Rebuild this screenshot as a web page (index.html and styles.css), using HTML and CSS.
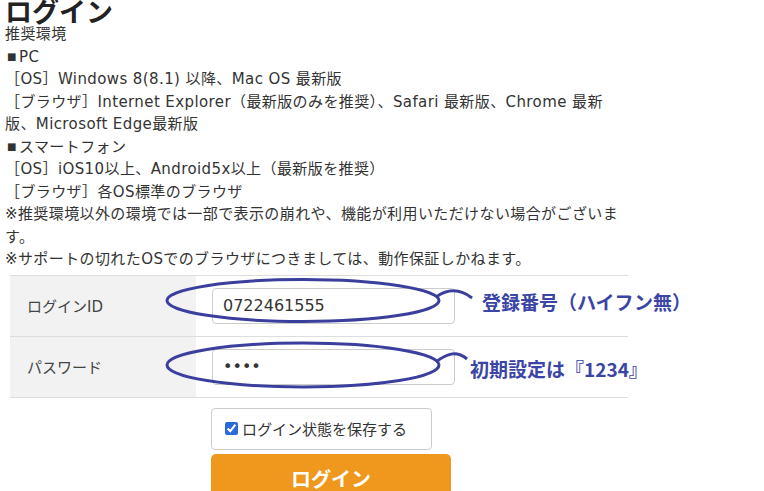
FILE: index.html
```html
<!DOCTYPE html>
<html lang="ja">
<head>
  <meta charset="UTF-8">
  <meta name="viewport" content="width=device-width, initial-scale=1.0">
  <title>ログイン</title>
  <link rel="stylesheet" href="styles.css">
</head>
<body>

<div class="page">
  <h1>ログイン</h1>
  <div class="env">
    <div>推奨環境</div>
    <div><span class="sq">■</span>PC</div>
    <div>［OS］Windows 8(8.1) 以降、Mac OS 最新版</div>
    <div>［ブラウザ］Internet Explorer（最新版のみを推奨）、Safari 最新版、Chrome 最新</div>
    <div>版、Microsoft Edge最新版</div>
    <div><span class="sq">■</span>スマートフォン</div>
    <div>［OS］iOS10以上、Android5x以上（最新版を推奨）</div>
    <div>［ブラウザ］各OS標準のブラウザ</div>
    <div>※推奨環境以外の環境では一部で表示の崩れや、機能が利用いただけない場合がございま</div>
    <div>す。</div>
    <div>※サポートの切れたOSでのブラウザにつきましては、動作保証しかねます。</div>
  </div>

  <table class="login-table">
    <tr>
      <th>ログインID</th>
      <td><input type="text" value="0722461555"></td>
    </tr>
    <tr>
      <th>パスワード</th>
      <td><input type="password" value="1234"></td>
    </tr>
  </table>

  <div class="actions">
    <label class="remember"><input type="checkbox" checked> ログイン状態を保存する</label>
    <button class="login-btn">ログイン</button>
  </div>
</div>

<!-- 手書きの注釈 -->
<svg class="marks" width="764" height="491" viewBox="0 0 764 491">
  <ellipse cx="303" cy="300.5" rx="136" ry="21" />
  <path d="M436 297 C446 290, 458 287, 472 298" />
  <ellipse cx="303" cy="365" rx="136" ry="22" />
  <path d="M436 362 C446 354, 456 350, 467 359" />
</svg>
<div class="note note-id">登録番号（ハイフン無）</div>
<div class="note note-pw">初期設定は『1234』</div>

</body>
</html>
```

FILE: styles.css
```css
body {
  margin: 0;
  font-family: "DejaVu Sans", "Noto Sans CJK JP", sans-serif;
  color: #333;
  background-color: #fff;
  overflow: hidden;
}

.page {
  padding: 0 5px;
}

h1 {
  margin: -1px 0 0;
  font-family: "Noto Sans CJK JP", sans-serif;
  font-size: 27px;
  line-height: 24px;
  font-weight: 700;
  color: #222;
}

.env {
  font-size: 15px;
  line-height: 22.5px;
  letter-spacing: 0.4px;
  white-space: nowrap;
}

.env > div {
  height: 22.5px;
}

.sq {
  display: inline-block;
  width: 12px;
  padding-left: 2px;
  font-size: 10px;
  vertical-align: top;
}

.login-table {
  margin: 4px 0 0 5px;
  width: 618px;
  border-collapse: collapse;
  border-top: 1px solid #ddd;
}

.login-table tr {
  border-bottom: 1px solid #ddd;
}

.login-table th {
  width: 169px;
  height: 60px;
  padding: 0 0 0 17px;
  background-color: #f2f2f2;
  text-align: left;
  font-weight: normal;
  font-size: 15px;
  color: #444;
}

.login-table td {
  padding: 0 0 0 16px;
}

.login-table input {
  width: 243px;
  height: 36px;
  padding: 0 10px;
  box-sizing: border-box;
  border: 1px solid #ccc;
  border-radius: 4px;
  font-family: "DejaVu Sans", sans-serif;
  font-size: 16px;
  color: #333;
}

.actions {
  margin: 10px 0 0 206px;
}

.remember {
  display: flex;
  align-items: center;
  gap: 4px;
  width: 221px;
  height: 42px;
  padding-left: 13px;
  box-sizing: border-box;
  border: 1px solid #ccc;
  border-radius: 4px;
  font-size: 15px;
  color: #333;
}

.remember input {
  margin: 0;
  width: 13px;
  height: 13px;
  accent-color: #2a6ad8;
}

.login-btn {
  display: block;
  margin-top: 4px;
  width: 240px;
  height: 50px;
  border: none;
  border-radius: 5px;
  background-color: #f0981e;
  color: #fff;
  font-family: "Noto Sans CJK JP", sans-serif;
  font-size: 20px;
  font-weight: 700;
  padding-bottom: 2px;
}

.marks {
  position: absolute;
  top: 0;
  left: 0;
  pointer-events: none;
}

.marks ellipse,
.marks path {
  fill: none;
  stroke: #3a3f9e;
  stroke-width: 3;
}

.note {
  position: absolute;
  font-family: "Noto Sans CJK JP", sans-serif;
  font-size: 19px;
  font-weight: 700;
  line-height: 24px;
  color: #3b45a6;
  white-space: nowrap;
}

.note-id {
  left: 482px;
  top: 290px;
}

.note-pw {
  left: 470px;
  top: 357px;
}
```
